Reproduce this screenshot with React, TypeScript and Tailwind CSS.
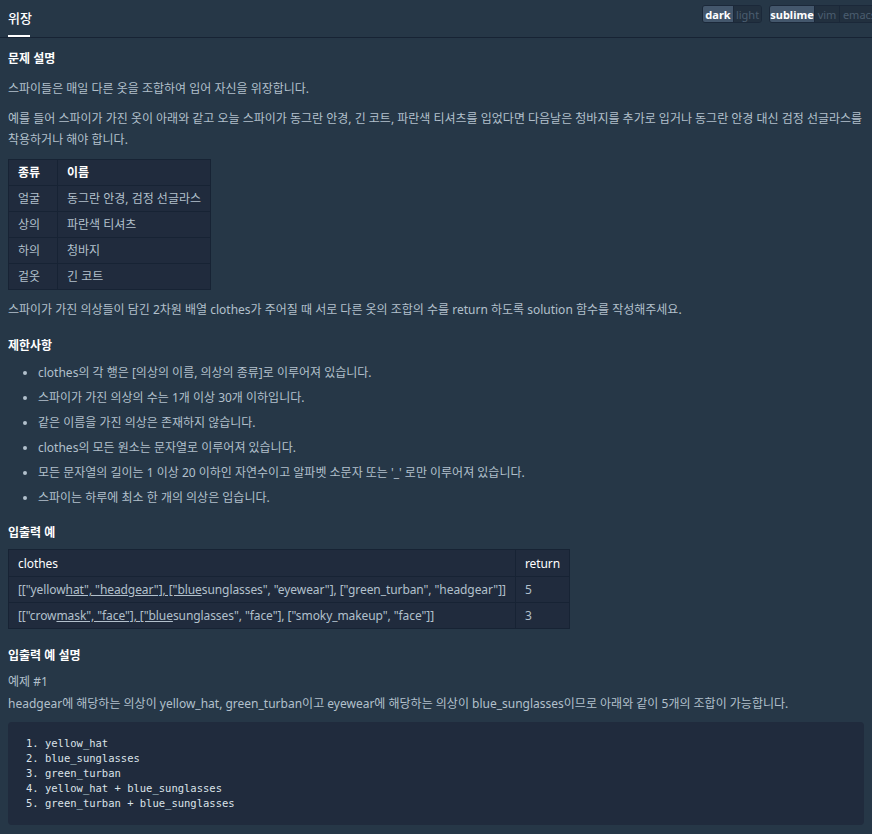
import React from 'react';

const bodyFont = "font-['Noto_Sans','Noto_Sans_CJK_KR',sans-serif]";

function Toggle({ items, active, widths }: { items: string[]; active: string; widths: string[] }) {
  return (
    <div className="flex h-[18px] shrink-0 overflow-hidden rounded-[3px] border border-[#1b2839] text-[11px] leading-none">
      {items.map((item, i) => (
        <span
          key={item}
          className={
            item === active
              ? `flex ${widths[i]} items-center justify-center bg-[#44576c] font-bold text-white`
              : `flex ${widths[i]} items-center justify-center border-l border-[#1b2839] bg-[#22303f] text-[#4b5e70]`
          }
        >
          {item}
        </span>
      ))}
    </div>
  );
}

const kinds = [
  ['얼굴', '동그란 안경, 검정 선글라스'],
  ['상의', '파란색 티셔츠'],
  ['하의', '청바지'],
  ['겉옷', '긴 코트'],
];

const rules = [
  'clothes의 각 행은 [의상의 이름, 의상의 종류]로 이루어져 있습니다.',
  '스파이가 가진 의상의 수는 1개 이상 30개 이하입니다.',
  '같은 이름을 가진 의상은 존재하지 않습니다.',
  'clothes의 모든 원소는 문자열로 이루어져 있습니다.',
  "모든 문자열의 길이는 1 이상 20 이하인 자연수이고 알파벳 소문자 또는 '_' 로만 이루어져 있습니다.",
  '스파이는 하루에 최소 한 개의 의상은 입습니다.',
];

const combos = [
  'yellow_hat',
  'blue_sunglasses',
  'green_turban',
  'yellow_hat + blue_sunglasses',
  'green_turban + blue_sunglasses',
];

export default function App() {
  const cell = 'whitespace-nowrap border border-[#172334] px-[9px] py-0 h-[26px]';

  return (
    <div className={`${bodyFont} min-h-[834px] w-full overflow-hidden bg-[#263747] text-[12px] text-[#b2c0cc]`}>
      <header className="flex h-[38px] items-start border-b border-[#172334] pl-2">
        <div className="flex h-[37px] flex-col justify-between">
          <span className="pt-[9px] text-[13px] font-medium leading-[18px] text-white">위장</span>
          <span className="h-[2px] w-[22px] bg-white" />
        </div>
        <div className="ml-auto -mr-[8px] mt-[5px] flex gap-[7px]">
          <Toggle items={['dark', 'light']} active="dark" widths={['w-[30px]', 'w-[28px]']} />
          <Toggle items={['sublime', 'vim', 'emacs']} active="sublime" widths={['w-[44px]', 'w-[25px]', 'w-[40px]']} />
        </div>
      </header>

      <main className="px-2 leading-[21px]">
        <h5 className="mt-[10px] font-bold text-white">문제 설명</h5>
        <p className="mt-[9px]">스파이들은 매일 다른 옷을 조합하여 입어 자신을 위장합니다.</p>
        <p className="mt-[9px]">
          예를 들어 스파이가 가진 옷이 아래와 같고 오늘 스파이가 동그란 안경, 긴 코트, 파란색 티셔츠를 입었다면 다음날은 청바지를 추가로 입거나 동그란 안경 대신 검정 선글라스를 착용하거나 해야 합니다.
        </p>

        <table className="mt-[9px] border-collapse bg-[#202b3d]">
          <thead>
            <tr>
              <th className={`${cell} w-[49px] text-left font-bold text-white`}>종류</th>
              <th className={`${cell} text-left font-bold text-white`}>이름</th>
            </tr>
          </thead>
          <tbody>
            {kinds.map(([k, n]) => (
              <tr key={k}>
                <td className={cell}>{k}</td>
                <td className={cell}>{n}</td>
              </tr>
            ))}
          </tbody>
        </table>

        <p className="mt-[9px]">
          스파이가 가진 의상들이 담긴 2차원 배열 clothes가 주어질 때 서로 다른 옷의 조합의 수를 return 하도록 solution 함수를 작성해주세요.
        </p>

        <h5 className="mt-[15px] font-bold text-white">제한사항</h5>
        <ul className="mt-[6px] list-disc pl-[30px]">
          {rules.map((r) => (
            <li key={r} className="mt-[4px] marker:text-[#b2c0cc]">
              {r}
            </li>
          ))}
        </ul>

        <h5 className="mt-[14px] font-bold text-white">입출력 예</h5>
        <table className="mt-[6px] border-collapse bg-[#202b3d] tracking-[-0.08px]">
          <thead>
            <tr>
              <th className={`${cell} h-[27px] text-left font-normal text-white`}>clothes</th>
              <th className={`${cell} h-[27px] text-left font-normal text-white`}>return</th>
            </tr>
          </thead>
          <tbody>
            <tr>
              <td className={cell}>
                [["yellow<u>hat", "headgear"], ["blue</u>sunglasses", "eyewear"], ["green_turban", "headgear"]]
              </td>
              <td className={cell}>5</td>
            </tr>
            <tr>
              <td className={cell}>
                [["crow<u>mask", "face"], ["blue</u>sunglasses", "face"], ["smoky_makeup", "face"]]
              </td>
              <td className={cell}>3</td>
            </tr>
          </tbody>
        </table>

        <h5 className="mt-[16px] font-bold text-white">입출력 예 설명</h5>
        <p className="mt-[5px]">예제 #1</p>
        <p className="mt-px">
          headgear에 해당하는 의상이 yellow_hat, green_turban이고 eyewear에 해당하는 의상이 blue_sunglasses이므로 아래와 같이 5개의 조합이 가능합니다.
        </p>
        <pre className="mt-[8px] rounded-[4px] bg-[#202b3d] px-[18px] py-[14px] font-['DejaVu_Sans_Mono',monospace] text-[10.5px] leading-[15px] text-[#dbe2e8]">
          {combos.map((c, i) => `${i + 1}. ${c}`).join('\n')}
        </pre>
      </main>
    </div>
  );
}
